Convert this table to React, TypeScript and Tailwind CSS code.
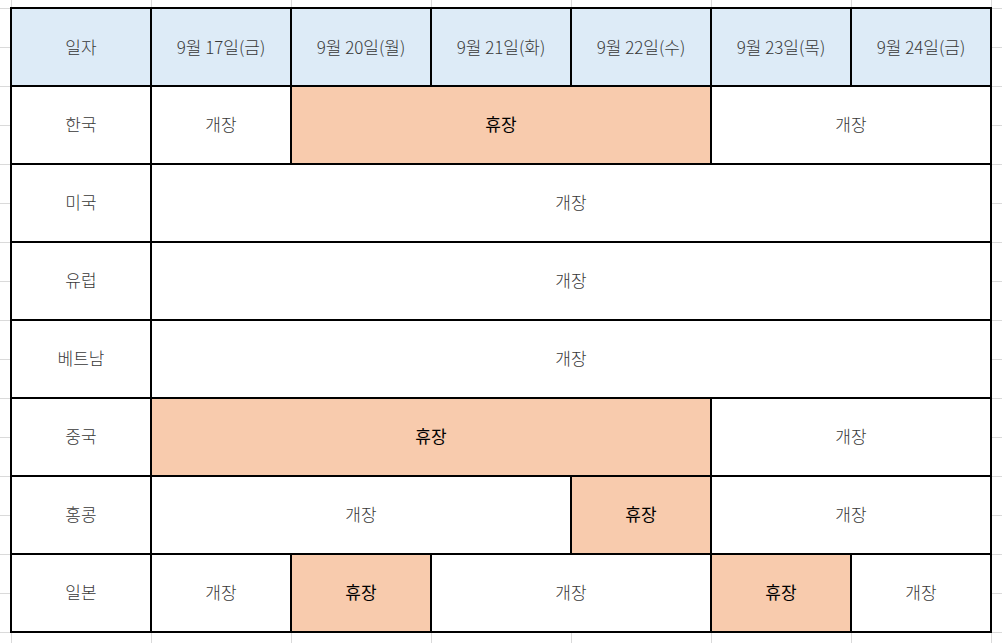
type Cell = { text: string; span: number; closed?: boolean };

const headers = ['9월 17일(금)', '9월 20일(월)', '9월 21일(화)', '9월 22일(수)', '9월 23일(목)', '9월 24일(금)'];

const rows: { country: string; cells: Cell[] }[] = [
  { country: '한국', cells: [{ text: '개장', span: 1 }, { text: '휴장', span: 3, closed: true }, { text: '개장', span: 2 }] },
  { country: '미국', cells: [{ text: '개장', span: 6 }] },
  { country: '유럽', cells: [{ text: '개장', span: 6 }] },
  { country: '베트남', cells: [{ text: '개장', span: 6 }] },
  { country: '중국', cells: [{ text: '휴장', span: 4, closed: true }, { text: '개장', span: 2 }] },
  { country: '홍콩', cells: [{ text: '개장', span: 3 }, { text: '휴장', span: 1, closed: true }, { text: '개장', span: 2 }] },
  {
    country: '일본',
    cells: [
      { text: '개장', span: 1 },
      { text: '휴장', span: 1, closed: true },
      { text: '개장', span: 2 },
      { text: '휴장', span: 1, closed: true },
      { text: '개장', span: 1 },
    ],
  },
];

export default function App() {
  return (
    <div
      className="w-[1002px] h-[643px] bg-white pt-[7px] pl-[10px] overflow-hidden bg-[linear-gradient(to_right,#dadada_1px,transparent_1px),linear-gradient(to_bottom,#dadada_1px,transparent_1px)] bg-size-[140px_39px] bg-position-[11px_8px]"
      style={{ fontFamily: '"Noto Sans CJK KR", "Noto Sans", sans-serif' }}
    >
      <table className="border-collapse table-fixed text-[17px] leading-none font-light text-[#383838]">
        <colgroup>
          {Array.from({ length: 7 }).map((_, i) => (
            <col key={i} className="w-[140px]" />
          ))}
        </colgroup>
        <thead>
          <tr className="h-[78px] bg-[#ddebf7]">
            <th className="border-2 border-black font-light pb-[1px]">일자</th>
            {headers.map((h) => (
              <th key={h} className="border-2 border-black font-light pb-[1px]">
                {h}
              </th>
            ))}
          </tr>
        </thead>
        <tbody>
          {rows.map((row) => (
            <tr key={row.country} className="h-[78px]">
              <td className="border-2 border-black bg-white text-center pb-[3px]">{row.country}</td>
              {row.cells.map((c, i) => (
                <td
                  key={i}
                  colSpan={c.span}
                  className={
                    c.closed
                      ? 'border-2 border-black bg-[#f8cbad] text-center font-normal text-black pb-[3px]'
                      : 'border-2 border-black bg-white text-center pb-[3px]'
                  }
                >
                  {c.text}
                </td>
              ))}
            </tr>
          ))}
        </tbody>
      </table>
    </div>
  );
}
